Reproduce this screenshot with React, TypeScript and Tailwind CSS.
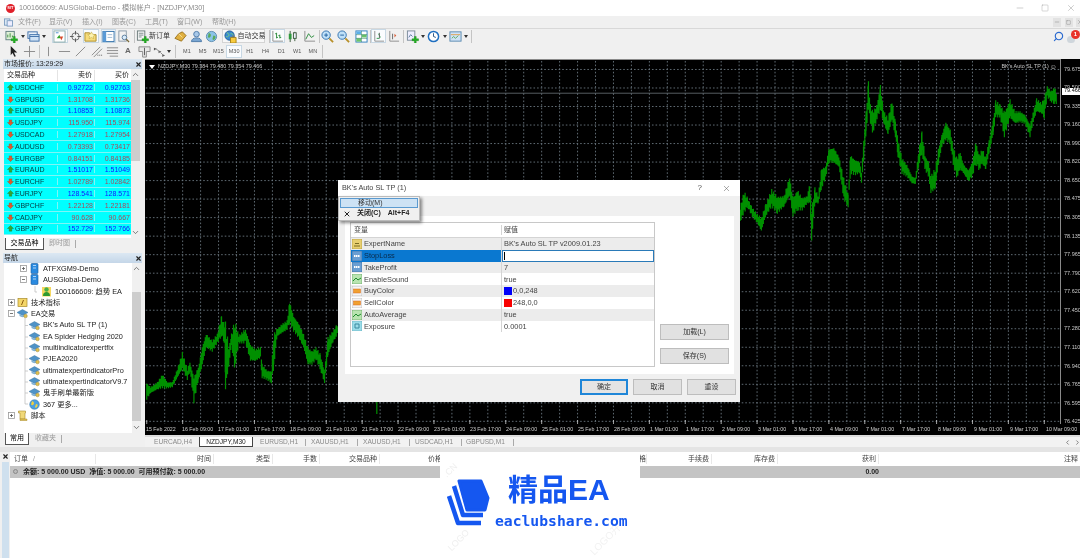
import { ReactNode } from "react";
import { Minus, Square, X, Search, ChevronUp, ChevronDown, ChevronLeft, ChevronRight } from "lucide-react";

const quotes = [
  ["USDCHF", "0.92722", "0.92763", 1],
  ["GBPUSD", "1.31708", "1.31736", 0],
  ["EURUSD", "1.10853", "1.10873", 1],
  ["USDJPY", "115.950", "115.974", 0],
  ["USDCAD", "1.27918", "1.27954", 0],
  ["AUDUSD", "0.73393", "0.73417", 0],
  ["EURGBP", "0.84151", "0.84185", 0],
  ["EURAUD", "1.51017", "1.51049", 1],
  ["EURCHF", "1.02789", "1.02842", 0],
  ["EURJPY", "128.541", "128.571", 1],
  ["GBPCHF", "1.22128", "1.22181", 0],
  ["CADJPY", "90.628", "90.667", 0],
  ["GBPJPY", "152.729", "152.766", 1],
] as const;

const prices = ["79.675", "79.500", "79.335", "79.160", "78.990", "78.820", "78.650", "78.475", "78.305", "78.135", "77.965", "77.790", "77.620", "77.450", "77.280", "77.110", "76.940", "76.765", "76.595", "76.425"];
const times = ["15 Feb 2022", "16 Feb 09:00", "17 Feb 01:00", "17 Feb 17:00", "18 Feb 09:00", "21 Feb 01:00", "21 Feb 17:00", "22 Feb 09:00", "23 Feb 01:00", "23 Feb 17:00", "24 Feb 09:00", "25 Feb 01:00", "25 Feb 17:00", "28 Feb 09:00", "1 Mar 01:00", "1 Mar 17:00", "2 Mar 09:00", "3 Mar 01:00", "3 Mar 17:00", "4 Mar 09:00", "7 Mar 01:00", "7 Mar 17:00", "8 Mar 09:00", "9 Mar 01:00", "9 Mar 17:00", "10 Mar 09:00"];

// x, top, bottom of the price band, left of the dialog (3x crop coords from 145,300)
const leftBand = [[3,245,300],[15,260,280],[35,245,270],[50,220,265],[65,245,265],[80,245,262],[95,205,235],[110,155,210],[125,205,240],[133,185,215],[145,225,310],[158,200,245],[170,135,200],[182,98,145],[200,120,155],[215,100,130],[228,45,110],[236,70,130],[240,60,280],[250,140,200],[258,100,140],[268,55,215],[280,105,130],[300,85,130],[315,130,185],[330,145,185],[345,140,175],[350,190,235],[365,210,240],[378,210,250],[385,100,210],[395,85,110],[410,70,100],[425,60,90],[433,0,70],[445,45,95],[460,65,115],[475,100,145],[488,140,195],[500,150,195],[512,140,180],[525,160,210],[538,210,250],[548,110,170],[560,95,135],[573,75,110],[578,70,100]];
// same idea, right of the dialog (3x crop coords from 730,60)
const rightBand = [[30,450,495],[45,390,460],[55,410,440],[70,440,470],[85,460,490],[97,470,515],[110,430,470],[128,385,440],[145,405,460],[165,405,440],[182,345,410],[192,410,470],[205,385,450],[220,410,450],[235,405,430],[242,365,430],[248,440,550],[258,380,430],[268,405,430],[278,320,385],[290,315,355],[300,262,305],[315,258,310],[330,285,320],[345,350,420],[358,400,440],[365,280,340],[380,295,345],[392,300,340],[398,330,370],[405,235,300],[412,150,220],[419,60,150],[425,130,190],[432,150,220],[445,130,175],[455,70,150],[465,150,190],[478,170,225],[490,115,180],[500,180,230],[508,235,290],[520,290,340],[535,310,350],[550,345,370],[560,350,372],[570,270,320],[580,210,280],[590,285,330],[600,300,350],[607,345,398],[620,320,390],[630,260,310],[640,220,260],[652,180,240],[665,205,250],[675,260,320],[685,290,355],[695,270,330],[705,310,340],[720,325,365],[732,300,350],[742,240,310],[752,280,330],[762,262,310],[772,290,330],[782,235,280],[795,170,220],[802,118,170],[815,130,170],[828,150,230],[845,115,175],[860,150,190],[875,150,185],[890,160,190],[905,190,230],[915,150,185],[925,112,155],[940,125,160],[948,105,175],[957,75,110],[970,90,125],[978,75,130],[985,95,130]];

function bandPath(band: number[][], ox: number, oy: number) {
  let d = "";
  for (let i = 0; i < band.length - 1; i++) {
    const [x0, t0, b0] = band[i];
    const [x1, t1, b1] = band[i + 1];
    for (let x = x0; x < x1; x += 3) {
      const k = (x - x0) / (x1 - x0);
      const t = t0 + (t1 - t0) * k;
      const b = b0 + (b1 - b0) * k;
      const n1 = (Math.sin(x * 7.3) + 1) / 2;
      const n2 = (Math.sin(x * 3.1 + 1) + 1) / 2;
      const top = oy + (t + (b - t) * n1 * 0.2) / 3;
      const bottom = oy + (b - (b - t) * n2 * 0.2) / 3;
      d += `M${(ox + x / 3).toFixed(1)} ${top.toFixed(1)}V${bottom.toFixed(1)}`;
    }
  }
  return d;
}

function Chart() {
  const vertical = Array.from({ length: 51 }, (_, i) => 164 + i * 18);
  const horizontal = Array.from({ length: 20 }, (_, i) => 68.5 + i * 18.57);
  return (
    <svg viewBox="145 59 916 365" className="absolute inset-0 h-full w-full">
      {vertical.map((x) => (
        <line key={x} x1={x} x2={x} y1={60} y2={424} stroke="#6a7680" strokeWidth="0.9" strokeDasharray="1.6 2" />
      ))}
      {horizontal.map((y) => (
        <line key={y} x1={145} x2={1061} y1={y} y2={y} stroke="#6a7680" strokeWidth="0.9" strokeDasharray="1.6 2" />
      ))}
      <line x1={145} x2={1061} y1={92.3} y2={92.3} stroke="#6b747a" strokeWidth="0.8" />
      <path d={bandPath(leftBand, 145, 300)} stroke="#008f00" strokeWidth="1.2" fill="none" />
      <path d={bandPath(rightBand, 730, 60)} stroke="#008f00" strokeWidth="1.2" fill="none" />
      <path d="M376.7 402V414" stroke="#008f00" strokeWidth="1.2" />
      {times.map((t, i) => (
        <line key={t} x1={146 + i * 36} x2={146 + i * 36} y1={420} y2={424} stroke="#c8c8c8" strokeWidth="0.8" />
      ))}
    </svg>
  );
}

function Doc({ children }: { children?: ReactNode }) {
  return (
    <svg viewBox="0 0 14 14" className="h-[13px] w-[13px] shrink-0">
      {children}
    </svg>
  );
}

const plus = <path d="M9 7h2v2.5h2.5v2H11V14H9v-2.5H6.5v-2H9z" fill="#22b322" stroke="#127a12" strokeWidth="0.4" />;

const toolbarIcons: Record<string, ReactNode> = {
  newChart: <Doc><rect x="1" y="1.5" width="9" height="9" fill="#dff0d8" stroke="#5f7f7f" /><path d="M3 8V5M5.5 8V3.5M8 8V6" stroke="#3a8f3a" />{plus}</Doc>,
  profiles: <Doc><rect x="1" y="2" width="10" height="7" fill="#e8f1fa" stroke="#3c6ea8" /><rect x="3" y="5" width="10" height="7" fill="#cfe2f5" stroke="#3c6ea8" /><path d="M3 7h10" stroke="#3c6ea8" /></Doc>,
  market: <Doc><rect x="1" y="1" width="12" height="12" fill="#fff" stroke="#8aa" /><path d="M4 9l3-4 1 4z" fill="#28a828" /><path d="M7 7l4 0-2 4z" fill="#d84a2a" /><path d="M3 3l3 0" stroke="#4488cc" /></Doc>,
  crosshair: <Doc><circle cx="7" cy="7" r="4" fill="none" stroke="#6a6a6a" /><path d="M7 1v4M7 9v4M1 7h4M9 7h4" stroke="#555" /></Doc>,
  navigator: <Doc><path d="M1 3h5l1 2h6v7H1z" fill="#f7dc7a" stroke="#a98a2a" /><path d="M8 2l1.2 2.4L12 5l-2 1.8.5 2.6L8 8 5.5 9.4 6 6.8 4 5l2.8-.6z" fill="#fdf3b0" stroke="#b89a30" strokeWidth="0.5" /></Doc>,
  terminal: <Doc><rect x="1" y="1.5" width="12" height="11" fill="#fff" stroke="#2e6ea8" /><rect x="1" y="1.5" width="3.5" height="11" fill="#5a9ad6" /><path d="M6 5h5M6 8h5" stroke="#9db9d3" /></Doc>,
  tester: <Doc><rect x="2" y="1" width="8" height="11" fill="#f2f2f2" stroke="#8a9aa8" /><circle cx="8" cy="8" r="2.5" fill="#d9ecfb" stroke="#5a7a9a" /><path d="M10 10l3 3" stroke="#7a6a3a" strokeWidth="1.4" /></Doc>,
  order: <Doc><rect x="1.5" y="1" width="8" height="10" fill="#f6f6f6" stroke="#6a7a7a" /><path d="M3 3.5h5M3 5.5h5M3 7.5h3" stroke="#7a8a8a" />{plus}</Doc>,
  gold: <Doc><path d="M1 9l4-5 4-2 4 4-5 6z" fill="#e0b040" stroke="#9a7420" /><path d="M5 4l4 4" stroke="#f8e49a" /></Doc>,
  mail: <Doc><circle cx="7" cy="4.5" r="3" fill="#a8c8e8" stroke="#4a78a8" /><path d="M1.5 12.5c.5-3 2.5-4 5.5-4s5 1 5.5 4z" fill="#7aa6d2" stroke="#4a78a8" /></Doc>,
  globe: <Doc><circle cx="7" cy="7" r="5.5" fill="#8cc4e8" stroke="#5a8ab0" /><path d="M4 3c2 1 3 2 2 4s-2 1-3 1M9 6c2 0 3 1 2 3s-2 2-3 1z" fill="#5aaa5a" /></Doc>,
  auto: <Doc><circle cx="6" cy="6" r="5" fill="#3a8ad0" stroke="#1e5a98" /><path d="M3 3c2 .5 3 2 2 3.5S3 7 2 7M7 4c2-.5 3 1 3 2" stroke="#7ad07a" fill="none" /><path d="M7 8h6v6H7z" fill="#f8cc40" stroke="#a88418" /><path d="M9 8V6.5h2V8" fill="none" stroke="#777" /></Doc>,
  bars: <Doc><path d="M2 1v11h11" stroke="#8a8a8a" fill="none" /><path d="M6 3v6M6 4H4.5M6 8h1.5M9.5 5v4M9.5 6H8M9.5 8H11" stroke="#2a8a3a" fill="none" /></Doc>,
  candles: <Doc><path d="M4.5 1v12M9.5 2v10" stroke="#3a5a3a" /><rect x="3" y="4" width="3" height="6" fill="#2f9a3f" /><rect x="8" y="3" width="3" height="6" fill="#eef" stroke="#3a5a3a" /></Doc>,
  line: <Doc><path d="M2 1v11h11" stroke="#8a8a8a" fill="none" /><path d="M3 10l3-6 3 4 3-2" stroke="#2a8a3a" fill="none" /></Doc>,
  zoomIn: <Doc><circle cx="5.5" cy="5.5" r="4.5" fill="#bfe0f8" stroke="#2f6fae" /><path d="M3.5 5.5h4M5.5 3.5v4" stroke="#1f5f9e" /><path d="M9 9l4 4" stroke="#b8902a" strokeWidth="2" /></Doc>,
  zoomOut: <Doc><circle cx="5.5" cy="5.5" r="4.5" fill="#bfe0f8" stroke="#2f6fae" /><path d="M3.5 5.5h4" stroke="#1f5f9e" /><path d="M9 9l4 4" stroke="#b8902a" strokeWidth="2" /></Doc>,
  grid: <Doc><rect x="1" y="1" width="12" height="12" fill="#fff" stroke="#2f7fbf" /><rect x="1.5" y="1.5" width="5" height="3" fill="#5aaee8" /><rect x="7.5" y="5" width="5" height="3" fill="#6ac46a" /><rect x="1.5" y="9" width="5" height="3.5" fill="#6ac46a" /><path d="M1 5h12M1 9h12M7 1v12" stroke="#2f7f5f" strokeWidth="0.6" /></Doc>,
  shift: <Doc><path d="M3 1v11h10" stroke="#8a8a8a" fill="none" /><path d="M7 4l2 4M5 9h3" stroke="#2a9a4a" /><path d="M8 3v6" stroke="#666" /></Doc>,
  shift2: <Doc><path d="M3 1v11h10" stroke="#8a8a8a" fill="none" /><path d="M6 4v6" stroke="#666" /><path d="M8 4l2 2-2 2z" fill="#d8603a" /></Doc>,
  addInd: <Doc><rect x="1.5" y="1" width="8" height="10" fill="#eef" stroke="#7a8a9a" /><path d="M3 8l2-3 2 2" stroke="#5a7a9a" fill="none" />{plus}</Doc>,
  clock: <Doc><circle cx="7" cy="7" r="5.5" fill="#fff" stroke="#1f6fc0" strokeWidth="1.6" /><path d="M7 3.5V7l2.5 1" stroke="#1f4f80" fill="none" /></Doc>,
  template: <Doc><rect x="1" y="2" width="12" height="10" fill="#cfe2f5" stroke="#5a8ab0" /><path d="M2 5h10" stroke="#e0a050" /><path d="M3 9l2-2 2 2 3-3" stroke="#5aaa5a" fill="none" /></Doc>,
};

function Caret() {
  return <span className="ml-[1px] mr-[1px] h-0 w-0 shrink-0 border-x-[2px] border-t-[3px] border-x-transparent border-t-[#333]" />;
}

function ToolButton({ name, active }: { name: string; active?: boolean }) {
  return (
    <span className={`flex h-[14px] w-[15.5px] shrink-0 items-center justify-center ${active ? "border border-[#c8d8e4] bg-[#fafcfe]" : ""}`}>
      {toolbarIcons[name]}
    </span>
  );
}

function Sep({ className = "ml-[2px]" }: { className?: string }) {
  return <span className={`h-[13px] w-px shrink-0 bg-[#c4c4c4] ${className}`} />;
}

function Slot({ children, narrow }: { children: ReactNode; narrow?: boolean }) {
  return <span className={`flex shrink-0 items-center justify-center ${narrow ? "w-[14px]" : "w-[16px]"}`}>{children}</span>;
}

function Toolbars() {
  return (
    <div className="relative h-[31px] border-t border-[#d8d8d8] bg-[#f0f0f0] text-[#333]">
      <div className="flex h-[14px] items-center pl-[4px]">
        <ToolButton name="newChart" /><Caret />
        <ToolButton name="profiles" /><Caret />
        <span className="w-[5px] shrink-0" />
        <ToolButton name="market" active />
        <ToolButton name="crosshair" />
        <ToolButton name="navigator" active />
        <span className="w-[2px] shrink-0" />
        <ToolButton name="terminal" active />
        <ToolButton name="tester" />
        <Sep />
        <ToolButton name="order" />
        <span className="-ml-[1px] mr-[3px] whitespace-nowrap text-[7px]">新订单</span>
        <ToolButton name="gold" />
        <ToolButton name="mail" />
        <ToolButton name="globe" />
        <span className="ml-[2px] flex h-[14px] w-[43px] shrink-0 items-center gap-[1px] whitespace-nowrap border border-[#d4d4d4] bg-[#f8f8f8] pl-[1px] text-[7px]">
          {toolbarIcons.auto}自动交易
        </span>
        <Sep className="ml-[4px]" />
        <ToolButton name="bars" active />
        <ToolButton name="candles" />
        <span className="w-px shrink-0" />
        <ToolButton name="line" />
        <Sep />
        <ToolButton name="zoomIn" />
        <ToolButton name="zoomOut" />
        <span className="w-[3px] shrink-0" />
        <ToolButton name="grid" />
        <Sep className="ml-0" />
        <ToolButton name="shift" active />
        <ToolButton name="shift2" />
        <Sep className="ml-[1px]" />
        <span className="w-px shrink-0" />
        <ToolButton name="addInd" /><Caret />
        <ToolButton name="clock" /><Caret />
        <ToolButton name="template" /><Caret />
        <Sep />
      </div>
      <div className="flex h-[16px] items-center pl-[5px] text-[#555]">
        <Slot><svg viewBox="0 0 14 14" className="h-[13px] w-[13px]"><path d="M4 1l7 7H7.5l2 4-1.5.7-2-4L4 11z" fill="#222" /></svg></Slot>
        <Slot><svg viewBox="0 0 14 14" className="h-[13px] w-[13px]"><path d="M7 1v12M1 7h12" stroke="#888" /></svg></Slot>
        <Sep className="ml-[2px]" />
        <Slot><svg viewBox="0 0 14 14" className="h-[13px] w-[13px]"><path d="M7 2v10" stroke="#888" /></svg></Slot>
        <Slot><svg viewBox="0 0 14 14" className="h-[13px] w-[13px]"><path d="M1 7h12" stroke="#888" /></svg></Slot>
        <Slot><svg viewBox="0 0 14 14" className="h-[13px] w-[13px]"><path d="M2 12L12 2" stroke="#888" /></svg></Slot>
        <Slot><svg viewBox="0 0 14 14" className="h-[13px] w-[13px]"><path d="M2 11L11 2M4 13l9-9" stroke="#888" /><path d="M8 11h5" stroke="#555" strokeDasharray="1 1" /></svg></Slot>
        <Slot><svg viewBox="0 0 14 14" className="h-[13px] w-[13px]"><path d="M1 3h12M1 6h12M1 9h12M4 12h9" stroke="#888" /></svg></Slot>
        <Slot><span className="text-[8px] font-bold text-[#666]">A</span></Slot>
        <Slot><svg viewBox="0 0 14 14" className="h-[13px] w-[13px]"><path d="M1 2h12v5H9v6H5V7H1z" fill="#e8e8e8" stroke="#888" /><path d="M7 3v8" stroke="#555" /></svg></Slot>
        <Slot narrow><svg viewBox="0 0 14 14" className="h-[13px] w-[13px]"><path d="M1 3l3 1-3 2zM6 6l3 1-3 2zM10 10l3 1-3 2z" fill="#555" /><path d="M3 4l4 3M8 8l3 3" stroke="#888" /></svg></Slot>
        <Caret />
        <Sep className="ml-[3px] mr-[3px]" />
        {["M1", "M5", "M15", "M30", "H1", "H4", "D1", "W1", "MN"].map((p) => (
          <span key={p} className={`flex h-[13px] w-[15.75px] shrink-0 items-center justify-center text-[5.5px] ${p === "M30" ? "border border-[#c8d8e4] bg-[#fafcfe]" : ""}`}>
            {p}
          </span>
        ))}
        <Sep className="ml-[1px]" />
      </div>
      <div className="absolute right-0 top-0 flex h-[15px] items-center gap-[3.5px]">
        <Search size={11} strokeWidth={2.5} className="-scale-x-100 text-[#2a6ad0]" />
        <span className="relative h-[13px] w-[13px]">
          <span className="absolute bottom-0 left-0 h-[7px] w-[8px] rounded-full bg-[#cfd6dc]" />
          <span className="absolute right-0 top-0 flex h-[9px] w-[9px] items-center justify-center rounded-full bg-[#e8322a] text-[6px] font-bold text-white">1</span>
        </span>
      </div>
    </div>
  );
}

function PanelHeader({ children }: { children: ReactNode }) {
  return (
    <div className="mx-[3px] flex h-[10px] items-center justify-between bg-gradient-to-b from-[#dce8f3] to-[#c4d6e8] pl-[1px] text-[7px] text-[#222]">
      <span>{children}</span>
      <X size={7} strokeWidth={4} className="text-[#222]" />
    </div>
  );
}

function ScrollBar({ thumb }: { thumb: string }) {
  return (
    <div className="flex w-[9px] shrink-0 flex-col bg-[#f0f0f0]">
      <ChevronUp size={9} className="h-[11px] text-[#555]" />
      <div className="relative flex-1">
        <div className={`absolute inset-x-0 bg-[#cdcdcd] ${thumb}`} />
      </div>
      <ChevronDown size={9} className="h-[11px] text-[#555]" />
    </div>
  );
}

function Arrow({ up }: { up: boolean }) {
  return (
    <svg viewBox="0 0 8 8" className="h-[7px] w-[7px] shrink-0">
      {up ? (
        <path d="M4 .5L7.5 4H5.5v3h-3V4H.5z" fill="#39a52f" stroke="#1f6a1a" strokeWidth="0.4" />
      ) : (
        <path d="M4 7.5L7.5 4H5.5V1h-3v3H.5z" fill="#e4582a" stroke="#a03a18" strokeWidth="0.4" />
      )}
    </svg>
  );
}

function MarketWatch() {
  return (
    <div className="flex h-[193px] flex-col">
      <PanelHeader>市场报价: 13:29:29</PanelHeader>
      <div className="mx-[4px] flex flex-1 overflow-hidden">
        <div className="w-[127px] shrink-0 bg-white">
          <div className="flex h-[13px] items-center text-[7px] text-[#222]">
            <span className="w-[54px] border-r border-[#e4e4e4] pl-[3px]">交易品种</span>
            <span className="w-[37px] border-r border-[#e4e4e4] pr-[2px] text-right">卖价</span>
            <span className="w-[36px] pr-[2px] text-right">买价</span>
          </div>
          {quotes.map(([sym, bid, ask, up]) => (
            <div key={sym} className="flex h-[11.8px] items-center border-b border-[#7ff5f5] bg-[#00ffff] text-[7px] leading-none">
              <div className="flex w-[54px] items-center gap-[1px] border-r border-[#7ff5f5] pl-[3px] text-[#053a3f]">
                <Arrow up={up === 1} />
                {sym}
              </div>
              <div className={`w-[37px] border-r border-[#7ff5f5] pr-[1px] text-right ${up ? "text-[#1414ff]" : "text-[#a8485a]"}`}>{bid}</div>
              <div className={`w-[36px] pr-[1px] text-right ${up ? "text-[#1414ff]" : "text-[#a8485a]"}`}>{ask}</div>
            </div>
          ))}
        </div>
        <ScrollBar thumb="top-0 h-[81px]" />
      </div>
      <div className="flex h-[14px] items-start pl-[5px] text-[7px]">
        <span className="flex h-[12px] w-[39px] items-center justify-center border-x border-b border-[#555] bg-white">交易品种</span>
        <span className="ml-[5px] flex h-[11px] items-center pr-[5px] text-[#999]">即时图</span>
        <span className="mt-[2px] h-[8px] w-px bg-[#aaa]" />
      </div>
    </div>
  );
}

function Expander({ open }: { open?: boolean }) {
  return (
    <svg viewBox="0 0 7 7" className="mr-[2px] h-[7px] w-[7px] shrink-0">
      <rect x="0.5" y="0.5" width="6" height="6" fill="#fff" stroke="#9a9a9a" strokeWidth="0.8" />
      <path d={open ? "M2 3.5h3" : "M2 3.5h3M3.5 2v3"} stroke="#555" strokeWidth="0.8" />
    </svg>
  );
}

const treeIcons: Record<string, ReactNode> = {
  server: <svg viewBox="0 0 11 11" className="h-[11px] w-[11px] shrink-0"><rect x="2" y="0.5" width="7" height="10" rx="1" fill="#2a8ae0" stroke="#1a5a9a" strokeWidth="0.6" /><path d="M4 2.5h3M4 5h3" stroke="#cfe8ff" strokeWidth="0.8" /></svg>,
  account: <svg viewBox="0 0 11 11" className="h-[11px] w-[11px] shrink-0"><rect x="1" y="1" width="9" height="9.5" fill="#f6d860" /><circle cx="5.5" cy="3.5" r="2.2" fill="#4ab04a" /><path d="M2 10c0-3 1.5-4 3.5-4S9 7 9 10z" fill="#2f9a2f" /></svg>,
  indicator: <svg viewBox="0 0 11 11" className="h-[11px] w-[11px] shrink-0"><rect x="1" y="1.5" width="9" height="8" fill="#f4d668" stroke="#a88a2a" strokeWidth="0.7" /><path d="M6.5 3L4.5 8" stroke="#8a5a10" /></svg>,
  ea: <svg viewBox="0 0 11 11" className="h-[11px] w-[11px] shrink-0"><path d="M0 4.5L5.5 1.5 11 4.5 5.5 7.5z" fill="#4f93c7" stroke="#2f6a96" strokeWidth="0.4" /><path d="M2.5 6v2c2 1.5 4 1.5 6 0V6L5.5 7.7z" fill="#7fb0d4" /><circle cx="8.5" cy="8" r="1.8" fill="#e0c050" stroke="#8a7420" strokeWidth="0.4" /></svg>,
  more: <svg viewBox="0 0 11 11" className="h-[11px] w-[11px] shrink-0"><circle cx="5.5" cy="5.5" r="4.8" fill="#4aa0e0" stroke="#2a70a8" strokeWidth="0.5" /><path d="M3 2c2 1 2.5 2 1.5 3.5S3 6 2 5.5M7 5c2 0 2 1.5 1 3s-2 .5-2 0z" fill="#f0d040" /></svg>,
  script: <svg viewBox="0 0 11 11" className="h-[11px] w-[11px] shrink-0"><path d="M1.5 1h7v2H8v6H3V3H1.5z" fill="#f0d878" stroke="#a88a2a" strokeWidth="0.6" /><path d="M3 9h7v1.5H3z" fill="#e0c050" stroke="#a88a2a" strokeWidth="0.5" /></svg>,
};

const treeRows = [
  { text: "ATFXGM9-Demo", icon: "server", pad: "pl-[16px]", box: "closed" },
  { text: "AUSGlobal-Demo", icon: "server", pad: "pl-[16px]", box: "open" },
  { text: "100166609: 趋势 EA", icon: "account", pad: "pl-[28px]", box: "" },
  { text: "技术指标", icon: "indicator", pad: "pl-[4px]", box: "closed" },
  { text: "EA交易", icon: "ea", pad: "pl-[4px]", box: "open" },
  { text: "BK's Auto SL TP (1)", icon: "ea", pad: "pl-[16px]", box: "" },
  { text: "EA Spider Hedging 2020", icon: "ea", pad: "pl-[16px]", box: "" },
  { text: "multiindicatorexpertfix", icon: "ea", pad: "pl-[16px]", box: "" },
  { text: "PJEA2020", icon: "ea", pad: "pl-[16px]", box: "" },
  { text: "ultimatexpertindicatorPro", icon: "ea", pad: "pl-[16px]", box: "" },
  { text: "ultimatexpertindicatorV9.7", icon: "ea", pad: "pl-[16px]", box: "" },
  { text: "鬼手刷单最新版", icon: "ea", pad: "pl-[16px]", box: "" },
  { text: "367 更多...", icon: "more", pad: "pl-[16px]", box: "" },
  { text: "脚本", icon: "script", pad: "pl-[4px]", box: "closed" },
];

function Navigator() {
  return (
    <div className="flex flex-1 flex-col">
      <div className="h-px" />
      <PanelHeader>导航</PanelHeader>
      <div className="mx-[4px] flex flex-1 bg-white">
        <div className="relative w-[128px] shrink-0 text-[7.3px] leading-none text-[#222]">
          {treeRows.map((r) => (
            <div key={r.text} className={`flex h-[11.3px] items-center ${r.pad}`}>
              {r.box ? <Expander open={r.box === "open"} /> : <span className="w-[9px] shrink-0" />}
              {treeIcons[r.icon]}
              <span className="ml-[3px] whitespace-nowrap">{r.text}</span>
            </div>
          ))}
          <svg className="absolute inset-0 h-full w-full" viewBox="0 0 128 170">
            <path d="M21 55v86M21 62.5h3M21 74h3M21 85h3M21 96h3M21 108h3M21 119h3M21 130h3M21 141h3M31 23v6h2" stroke="#c0c0c0" strokeWidth="0.8" fill="none" />
          </svg>
        </div>
        <ScrollBar thumb="top-[18px] h-[129px]" />
      </div>
      <div className="flex h-[14px] items-start pl-[5px] text-[7px]">
        <span className="flex h-[12px] w-[24px] items-center justify-center border-x border-b border-[#555] bg-white">常用</span>
        <span className="ml-[6px] flex h-[11px] items-center pr-[5px] text-[#999]">收藏夹</span>
        <span className="mt-[2px] h-[8px] w-px bg-[#aaa]" />
      </div>
    </div>
  );
}

function ChartPane() {
  return (
    <div className="flex flex-col">
      <div className="flex h-[376px] flex-col bg-black">
        <div className="flex h-[365px]">
          <div className="relative w-[916px] border-t border-r border-[#8a8a8a]">
            <Chart />
            <div className="absolute left-[4px] top-[2px] flex items-center gap-[3px] whitespace-nowrap text-[5.4px] leading-[9px] text-[#c8c8c8]">
              <span className="h-0 w-0 border-x-[3px] border-t-[4px] border-x-transparent border-t-white" />
              NZDJPY,M30 79.384 79.480 79.354 79.466
            </div>
            <div className="absolute right-[3px] top-[2px] flex items-center gap-[1px] whitespace-nowrap text-[5.4px] leading-[9px] text-[#c8c8c8]">
              BK's Auto SL TP (1) <span className="text-[7px]">☺</span>
            </div>
          </div>
          <div className="relative w-[19px] pt-[1px] text-[5.5px] text-[#c8c8c8]">
            {prices.map((p) => (
              <div key={p} className="flex h-[18.57px] items-center whitespace-nowrap pl-[3px] leading-none">
                {p}
              </div>
            ))}
            <div className="absolute left-[1px] top-[28.5px] flex h-[7px] w-[18px] items-center bg-white pl-[2px] text-[5.5px] leading-none text-black">
              79.466
            </div>
          </div>
        </div>
        <div className="flex pl-[1px] pt-[1px] text-[5.3px] leading-[9px] text-[#d0d0d0]">
          {times.map((t) => (
            <span key={t} className="w-[36px] shrink-0 whitespace-nowrap">
              {t}
            </span>
          ))}
        </div>
      </div>
      <div className="h-[2px] bg-[#dcdcdc]" />
      <div className="flex h-[10px] items-center whitespace-nowrap bg-[#f2f2f2] text-[6.6px] text-[#8a8a8a]">
        <span className="ml-[9px] w-[45px]">EURCAD,H4</span>
        <span className="flex h-[10px] w-[54px] items-center justify-center border-x border-b border-[#444] bg-white text-[#222]">NZDJPY,M30</span>
        <span className="ml-[7px] w-[45px]">EURUSD,H1</span>
        <span className="h-[7px] w-px bg-[#aaa]" />
        <span className="ml-[5px] w-[46px]">XAUUSD,H1</span>
        <span className="h-[7px] w-px bg-[#aaa]" />
        <span className="ml-[5px] w-[46px]">XAUUSD,H1</span>
        <span className="h-[7px] w-px bg-[#aaa]" />
        <span className="ml-[5px] w-[46px]">USDCAD,H1</span>
        <span className="h-[7px] w-px bg-[#aaa]" />
        <span className="ml-[4px] w-[47px]">GBPUSD,M1</span>
        <span className="h-[7px] w-px bg-[#aaa]" />
        <span className="flex-1" />
        <ChevronLeft size={7} strokeWidth={3} className="text-[#777]" />
        <ChevronRight size={7} strokeWidth={3} className="ml-[3px] mr-[1px] text-[#777]" />
      </div>
    </div>
  );
}

function Terminal() {
  return (
    <div className="flex h-[111px] border-t-[5px] border-[#e4e4e4] text-[7px] text-[#444]">
      <div className="relative w-[10px] shrink-0 bg-[#f0f0f0]">
        <X size={7} strokeWidth={4} className="ml-[2px] mt-[1px] text-[#222]" />
        <div className="absolute bottom-0 left-[2px] top-[10px] w-[7px] bg-[#cfe0ee]" />
      </div>
      <div className="flex-1 bg-white">
        <div className="flex h-[14px] items-center">
          <span className="w-[86px] border-r border-[#e8e8e8] pl-[4px]">订单 <span className="ml-[3px] text-[#999]">/</span></span>
          <span className="w-[118px] border-r border-[#e8e8e8] pr-[2px] text-right">时间</span>
          <span className="w-[59px] border-r border-[#e8e8e8] pr-[2px] text-right">类型</span>
          <span className="w-[47px] border-r border-[#e8e8e8] pr-[2px] text-right">手数</span>
          <span className="w-[60px] border-r border-[#e8e8e8] pr-[2px] text-right">交易品种</span>
          <span className="w-[62px] text-right">价格</span>
          <span className="w-[204px] text-right">价格</span>
          <span className="w-[66px] border-x border-[#e8e8e8] pr-[2px] text-right">手续费</span>
          <span className="w-[66px] border-r border-[#e8e8e8] pr-[2px] text-right">库存费</span>
          <span className="w-[101px] border-r border-[#e8e8e8] pr-[2px] text-right">获利</span>
          <span className="flex-1 pr-[2px] text-right">注释</span>
        </div>
        <div className="flex h-[11.5px] items-center whitespace-nowrap bg-[#c4c4c4] font-bold text-[#222]">
          <span className="ml-[3px] mr-[5px] h-[5px] w-[5px] rounded-full border border-[#888] bg-[#bbb]" />
          余额: 5 000.00 USD&nbsp;&nbsp;净值: 5 000.00&nbsp;&nbsp;可用预付款: 5 000.00
          <span className="flex-1 pr-[201px] text-right">0.00</span>
        </div>
      </div>
    </div>
  );
}

const params = [
  { name: "ExpertName", value: "BK's Auto SL TP v2009.01.23", kind: "ab" },
  { name: "StopLoss", value: "", kind: "num" },
  { name: "TakeProfit", value: "7", kind: "num" },
  { name: "EnableSound", value: "true", kind: "bool" },
  { name: "BuyColor", value: "0,0,248", kind: "color", swatch: "bg-[#0000f8]" },
  { name: "SellColor", value: "248,0,0", kind: "color", swatch: "bg-[#f80000]" },
  { name: "AutoAverage", value: "true", kind: "bool" },
  { name: "Exposure", value: "0.0001", kind: "dbl" },
];

function ParamIcon({ kind }: { kind: string }) {
  if (kind === "ab")
    return <svg viewBox="0 0 10 10" className="h-[10px] w-[10px] shrink-0"><rect width="10" height="10" fill="#e8cf70" stroke="#a89030" strokeWidth="0.6" /><path d="M2 7h6M3 4.5h4" stroke="#7a6a20" /></svg>;
  if (kind === "num")
    return <svg viewBox="0 0 10 10" className="h-[10px] w-[10px] shrink-0"><rect width="10" height="10" fill="#6a9ed2" stroke="#3a6a9a" strokeWidth="0.6" /><path d="M2 5h6" stroke="#fff" strokeWidth="2" strokeDasharray="1.5 0.5" /></svg>;
  if (kind === "bool")
    return <svg viewBox="0 0 10 10" className="h-[10px] w-[10px] shrink-0"><rect width="10" height="10" fill="#b8e4b0" stroke="#5a9a5a" strokeWidth="0.6" /><path d="M1 7l3-3 2 2 3-2" stroke="#1f8a2f" fill="none" /></svg>;
  if (kind === "color")
    return <svg viewBox="0 0 10 10" className="h-[10px] w-[10px] shrink-0"><rect width="10" height="10" fill="#f4f4f4" stroke="#aaa" strokeWidth="0.6" /><rect x="1.5" y="3" width="7" height="4" fill="#f0a030" stroke="#d86a20" strokeWidth="0.5" /></svg>;
  return <svg viewBox="0 0 10 10" className="h-[10px] w-[10px] shrink-0"><rect width="10" height="10" fill="#9adce8" stroke="#5aa8b8" strokeWidth="0.6" /><path d="M3 3h4v4H3z" fill="none" stroke="#3a8aa0" /></svg>;
}

function DialogButton({ label, primary, className }: { label: string; primary?: boolean; className: string }) {
  return (
    <span className={`flex h-[16px] items-center justify-center text-[7px] text-[#333] ${primary ? "border-2 border-[#1f86d8] bg-[#e4e4e4]" : "border border-[#bdbdbd] bg-[#e1e1e1]"} ${className}`}>
      {label}
    </span>
  );
}

function Dialog() {
  return (
    <div className="absolute left-[338px] top-[180px] flex h-[222px] w-[402px] flex-col bg-[#f0f0f0] text-[7.4px] text-[#444]">
      <div className="flex h-[16px] items-center justify-between bg-white pl-[4px] pr-[9px] text-[7.3px] text-[#444]">
        <span>BK's Auto SL TP (1)</span>
        <span className="flex items-center gap-[20px] text-[#555]">
          <span className="text-[8px]">?</span>
          <X size={9} strokeWidth={1.3} />
        </span>
      </div>
      <div className="ml-[7px] mr-[6px] mt-[20px] flex h-[158px] gap-[5px] bg-white pl-[5px] pr-[5px] pt-[6px]">
        <div className="h-[145px] w-[305px] border border-[#c8c8c8] bg-white">
          <div className="flex h-[15px] items-center border-b border-[#d4d4d4] text-[7px]">
            <span className="w-[151px] border-r border-[#d4d4d4] pl-[3px]">变量</span>
            <span className="pl-[2px]">赋值</span>
          </div>
          {params.map((p, i) => (
            <div key={p.name} className={`flex h-[11.8px] items-center leading-none ${i % 2 === 0 ? "bg-[#ececec]" : "bg-white"}`}>
              <div className={`flex h-full w-[151px] items-center gap-[2px] border-r border-[#d4d4d4] pl-[1px] ${p.name === "StopLoss" ? "bg-[#0a78d0] text-[#0a2a4a]" : ""}`}>
                <ParamIcon kind={p.kind} />
                {p.name}
              </div>
              {p.name === "StopLoss" ? (
                <div className="flex h-full flex-1 items-center border border-[#2a7ab8] bg-white pl-[1px]">
                  <span className="h-[8px] w-px bg-black" />
                </div>
              ) : (
                <div className="flex flex-1 items-center gap-[1px] pl-[2px]">
                  {p.swatch && <span className={`h-[8px] w-[8px] ${p.swatch}`} />}
                  {p.value}
                </div>
              )}
            </div>
          ))}
        </div>
        <div className="flex w-[69px] flex-col gap-[8px] pt-[102px]">
          <DialogButton label="加载(L)" className="w-[69px]" />
          <DialogButton label="保存(S)" className="w-[69px]" />
        </div>
      </div>
      <div className="mt-[5px] flex justify-end gap-[5px] pr-[4px]">
        <DialogButton label="确定" primary className="w-[48px]" />
        <DialogButton label="取消" className="w-[49px]" />
        <DialogButton label="重设" className="w-[49px]" />
      </div>
      <div className="absolute left-0 top-[16px] w-[82px] whitespace-nowrap border border-[#bbb] bg-[#f0f0f0] p-px text-[7px] shadow-[2px_2px_3px_rgba(0,0,0,0.45)]">
        <div className="flex h-[10px] items-center border border-[#5a9ad0] bg-[#cde2f4] pl-[17px] text-[#333]">移动(M)</div>
        <div className="flex h-[11px] items-center font-bold text-[#222]">
          <X size={8} strokeWidth={3} className="ml-[3px] mr-[6px]" />
          关闭(C)
          <span className="ml-[7px]">Alt+F4</span>
        </div>
      </div>
    </div>
  );
}

function Watermark() {
  return (
    <div className="absolute left-[440px] top-[452px] h-[106px] w-[200px] overflow-hidden bg-white">
      <span className="absolute left-[3px] top-[12px] -rotate-45 text-[9px] text-[#efefef]">.CN</span>
      <span className="absolute left-[6px] top-[82px] -rotate-45 text-[9px] text-[#efefef]">LOGO</span>
      <span className="absolute right-[15px] top-[80px] -rotate-45 text-[10px] text-[#f2f2f2]">LOGO开</span>
      <svg viewBox="0 0 46 50" className="absolute left-[6px] top-[24px] h-[50px] w-[46px]">
        <path d="M13 5h22l7 17-3 12H21z" fill="#1557f0" stroke="#1557f0" strokeWidth="3" strokeLinejoin="round" />
        <path d="M8 10l9 29h20" fill="none" stroke="#1557f0" strokeWidth="4.5" strokeLinejoin="round" />
        <path d="M3 20l9 27h23" fill="none" stroke="#1557f0" strokeWidth="4.5" strokeLinejoin="round" />
      </svg>
      <span className="absolute left-[68px] top-[18px] whitespace-nowrap text-[30px] font-bold leading-[40px] text-[#1557f0]">精品EA</span>
      <span className="absolute left-[55px] top-[59px] whitespace-nowrap font-['DejaVu_Sans_Mono',monospace] text-[14.7px] font-bold leading-[20px] text-[#1557f0]">eaclubshare.com</span>
    </div>
  );
}

export default function App() {
  return (
    <div className="relative h-[558px] w-[1080px] overflow-hidden bg-[#f0f0f0] font-['Liberation_Sans','Noto_Sans_CJK_SC',sans-serif] blur-[0.3px]">
      <div className="flex h-[16px] items-center bg-white pl-[6px] text-[7.2px] text-[#8a8a8a]">
        <span className="mr-[4px] flex h-[9px] w-[9px] items-center justify-center rounded-full bg-[#e0202a] text-[4px] font-bold text-white">MT</span>
        100166609: AUSGlobal-Demo - 模拟帐户 - [NZDJPY,M30]
        <span className="ml-auto flex items-center text-[#888]">
          <Minus size={10} strokeWidth={1} className="mr-[16px]" />
          <Square size={8} strokeWidth={1} className="mr-[17px]" />
          <X size={10} strokeWidth={1} className="mr-[4px]" />
        </span>
      </div>
      <div className="flex h-[12px] items-center pl-[4px] text-[7px] text-[#999]">
        <svg viewBox="0 0 10 10" className="mr-[5px] h-[9px] w-[9px]"><rect x="0.5" y="1" width="6" height="7" fill="#dbe8f5" stroke="#7a9cc0" /><rect x="3.5" y="3" width="6" height="6" fill="#eef" stroke="#7a9cc0" /></svg>
        <span className="w-[31px]">文件(F)</span>
        <span className="w-[33px]">显示(V)</span>
        <span className="w-[30px]">插入(I)</span>
        <span className="w-[33px]">图表(C)</span>
        <span className="w-[32px]">工具(T)</span>
        <span className="w-[35px]">窗口(W)</span>
        <span>帮助(H)</span>
        <span className="-mr-[4px] ml-auto flex items-center gap-[3.5px] text-[#888]">
          <span className="flex h-[9px] w-[8px] items-center justify-center bg-[#e2e2e2]"><Minus size={6} /></span>
          <span className="flex h-[9px] w-[8px] items-center justify-center bg-[#e2e2e2]"><Square size={5} /></span>
          <span className="flex h-[9px] w-[8px] items-center justify-center bg-[#e2e2e2]"><X size={6} /></span>
        </span>
      </div>
      <Toolbars />
      <div className="flex h-[388px]">
        <div className="flex w-[145px] shrink-0 flex-col">
          <MarketWatch />
          <Navigator />
        </div>
        <ChartPane />
      </div>
      <Terminal />
      <Dialog />
      <Watermark />
    </div>
  );
}
